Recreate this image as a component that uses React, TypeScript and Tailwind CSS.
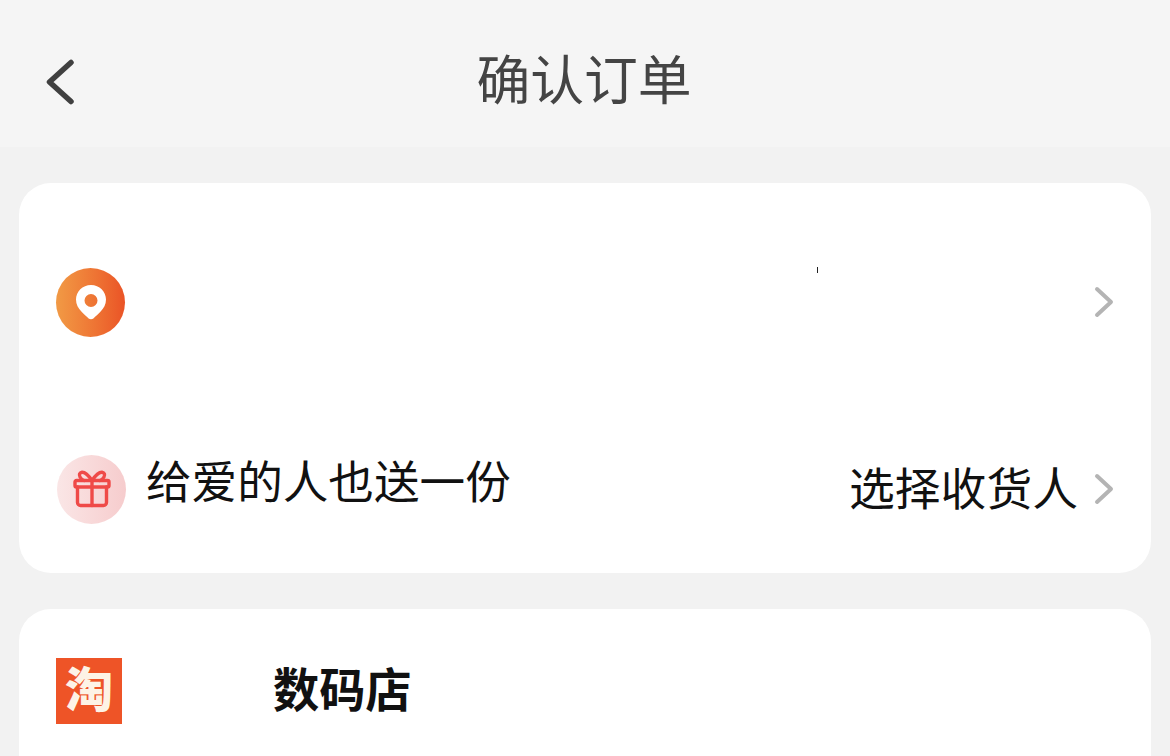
const cjk = "font-['Roboto','Noto_Sans_CJK_SC',sans-serif]";

function Chevron({ className }: { className: string }) {
  return (
    <svg viewBox="0 0 20 32" className={className} fill="none" stroke="#b4b4b4" strokeWidth="4" strokeLinecap="round" strokeLinejoin="round">
      <path d="M3 3 L17 16 L3 29" />
    </svg>
  );
}

function PinIcon() {
  return (
    <div className="flex h-[69px] w-[69px] shrink-0 items-center justify-center rounded-full bg-gradient-to-r from-[#f19a45] to-[#ea5326]">
      <svg viewBox="0 0 32 36" className="h-[36px] w-[32px]">
        <path
          fillRule="evenodd"
          fill="#fff"
          d="M16 1C7.500 1 1 7.600 1 15.600c0 5 2.200 8.700 5.600 12.200 2.600 2.600 5.200 5 7 6.600 1.400 1.100 3.400 1.100 4.800 0 1.800-1.600 4.400-4 7-6.600 3.400-3.500 5.600-7.200 5.600-12.200C31 7.600 24.500 1 16 1Zm0 9a6.500 6.500 0 1 1 0 13 6.500 6.500 0 0 1 0-13Z"
        />
      </svg>
    </div>
  );
}

function GiftIcon() {
  return (
    <div className="flex h-[69px] w-[69px] shrink-0 items-center justify-center rounded-full bg-gradient-to-r from-[#fae6e6] to-[#f6cccd]">
      <svg viewBox="0 0 40 40" className="h-[40px] w-[40px]" fill="none" stroke="#ef4a48" strokeWidth="3.400" strokeLinecap="round" strokeLinejoin="round">
        <path d="M4.500 11.500h31a1.500 1.500 0 0 1 1.500 1.500v3.500a1.500 1.500 0 0 1-1.500 1.500h-31a1.500 1.500 0 0 1-1.500-1.500V13a1.500 1.500 0 0 1 1.500-1.500Z" />
        <path d="M5.500 18v15.500a3 3 0 0 0 3 3h23a3 3 0 0 0 3-3V18" />
        <path d="M20 11.500v25" />
        <path d="M20 11.500C17 7 13.500 3 10 3.200 7.500 3.500 6.800 6 8 8c.8 1.500 2.500 3 4 3.500" />
        <path d="M20 11.500C23 7 26.500 3 30 3.200c2.500.3 3.200 2.800 2 4.800-.8 1.500-2.500 3-4 3.500" />
      </svg>
    </div>
  );
}

export default function App() {
  return (
    <div className={`h-[756px] w-[1170px] overflow-hidden bg-[#f2f2f2] ${cjk}`}>
      <header className="grid h-[147px] grid-cols-[1fr_auto_1fr] items-center bg-[#f5f5f5] pt-[16px] pl-[46px] pr-[48px]">
        <svg viewBox="0 0 28 46" className="h-[46px] w-[28px]" fill="none" stroke="#404040" strokeWidth="5.500" strokeLinecap="round" strokeLinejoin="round">
          <path d="M25 3.500 L3.500 23 L25 42.500" />
        </svg>
        <h1 className="text-[53.800px] leading-none font-normal text-[#444444]">确认订单</h1>
        <div />
      </header>

      <main className="flex flex-col gap-[36px] px-[19px] pt-[36px]">
        <section className="relative rounded-[32px] bg-white pb-[16px]">
          <div className="flex h-[238px] items-center justify-between px-[37px]">
            <PinIcon />
            <Chevron className="h-[32px] w-[20px]" />
          </div>
          <div className="absolute left-[798px] top-[84px] h-[6px] w-px bg-[#222222]" />
          <div className="flex h-[136px] items-center pl-[38px] pr-[37px]">
            <GiftIcon />
            <span className="ml-[20px] mb-[10px] text-[45.600px] leading-none text-[#111111]">给爱的人也送一份</span>
            <span className="ml-auto mr-[16px] mt-[3px] text-[45.800px] leading-none text-[#111111]">选择收货人</span>
            <Chevron className="h-[32px] w-[20px]" />
          </div>
        </section>

        <section className="rounded-t-[32px] bg-white pb-[40px]">
          <div className="flex items-center pl-[37px] pt-[49px]">
            <div className="flex h-[66px] w-[66px] shrink-0 items-center justify-center bg-[#ee5427] text-[48px] leading-none font-black text-[#fdf3e6]">
              淘
            </div>
            <span className="ml-[151px] mt-[1px] text-[46.200px] leading-none font-bold text-[#111111]">数码店</span>
          </div>
        </section>
      </main>
    </div>
  );
}
